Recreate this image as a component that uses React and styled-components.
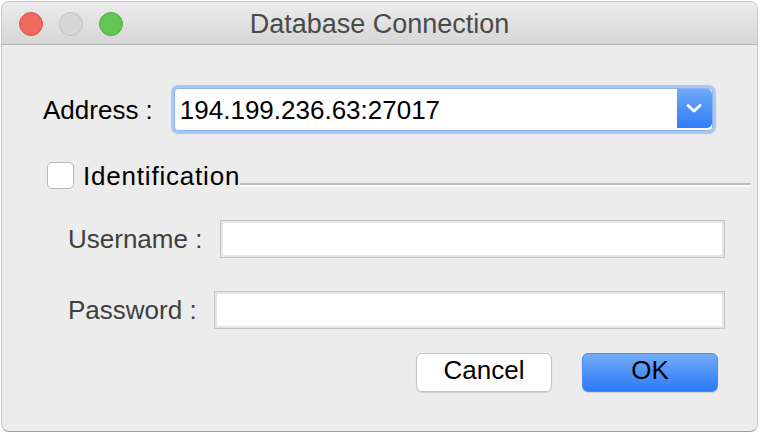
import React from "react";
import styled, { createGlobalStyle } from "styled-components";

const GlobalStyle = createGlobalStyle`
  html, body {
    margin: 0;
    padding: 0;
    background: #ffffff;
  }
  body {
    font-family: "Liberation Sans", Arial, sans-serif;
  }
`;

const Window = styled.div`
  box-sizing: border-box;
  margin: 1px 3px 0 1px;
  width: 757px;
  height: 431px;
  border: 1px solid #c6c6c6;
  border-bottom-color: #9f9f9f;
  border-radius: 8px;
  overflow: hidden;
  background: #ececec;
  display: flex;
  flex-direction: column;
`;

const TitleBar = styled.div`
  box-sizing: border-box;
  height: 43px;
  flex: none;
  display: grid;
  grid-template-columns: 1fr auto 1fr;
  align-items: center;
  background: linear-gradient(#ececec, #d6d6d6);
  border-bottom: 1px solid #b4b4b4;
`;

const Lights = styled.div`
  display: flex;
  gap: 16px;
  margin-top: 2px;
  padding-left: 17px;
`;

const Light = styled.span`
  box-sizing: border-box;
  width: 24px;
  height: 24px;
  border-radius: 50%;
  background: ${(p) => p.$color};
  border: 1px solid ${(p) => p.$edge};
`;

const Title = styled.div`
  font-size: 27px;
  color: #4a4a4a;
  margin-top: 3px;
`;

const Content = styled.div`
  display: flex;
  flex-direction: column;
  font-size: 26px;
  line-height: 30px;
`;

const AddressRow = styled.div`
  display: flex;
  align-items: center;
  margin-top: 43px;
  padding-left: 41px;
`;

const Label = styled.label`
  color: ${(p) => (p.$dim ? "#3f3f3f" : "#000")};
  letter-spacing: ${(p) => p.$spacing || 0}px;
  white-space: nowrap;
`;

const Combo = styled.div`
  box-sizing: border-box;
  display: flex;
  margin-left: 21px;
  width: 539px;
  height: 43px;
  background: #fff;
  border: 1px solid #8db3ee;
  border-radius: 4px;
  box-shadow: 0 0 0 3px #a8c7f4;
`;

const ComboText = styled.div`
  flex: 1;
  display: flex;
  align-items: center;
  padding-left: 5px;
  color: #000;
`;

const ComboButton = styled.div`
  width: 35px;
  margin: 0 0 2px;
  display: flex;
  align-items: center;
  justify-content: center;
  border-radius: 0 5px 5px 0;
  background: linear-gradient(#70aaf9, #2f7cf6);
`;

const CheckRow = styled.div`
  display: flex;
  align-items: center;
  height: 27px;
  margin-top: 31px;
  padding-left: 45px;
`;

const Checkbox = styled.span`
  box-sizing: border-box;
  width: 27px;
  height: 27px;
  margin-right: 9px;
  background: #fff;
  border: 1px solid #b9b9b9;
  border-radius: 5px;
`;

const Rule = styled.div`
  flex: 1;
  align-self: flex-end;
  height: 2px;
  margin: 0 6px 2px 0;
  background: #bdbdbd;
  border-bottom: 2px solid #fafafa;
`;

const FieldRow = styled.div`
  display: flex;
  align-items: center;
  margin-top: ${(p) => p.$top}px;
  padding: 0 32px 0 66px;
  gap: ${(p) => p.$gap}px;
`;

const TextInput = styled.div`
  box-sizing: border-box;
  flex: 1;
  height: 38px;
  background: #fff;
  border: 1px solid #c4c4c4;
  box-shadow: inset 0 0 0 2px #e6e6e6;
`;

const Buttons = styled.div`
  display: flex;
  justify-content: flex-end;
  gap: 30px;
  margin-top: 24px;
  padding-right: 39px;
`;

const Button = styled.button`
  box-sizing: border-box;
  width: 136px;
  height: 39px;
  font-family: inherit;
  font-size: 26px;
  color: #000;
  border-radius: 6px;
  padding: 0 0 5px;
  border: 1px solid ${(p) => (p.$primary ? "#4a89f2" : "#c3c3c3")};
  background: ${(p) =>
    p.$primary ? "linear-gradient(#72acf9, #2c79f5)" : "#ffffff"};
  box-shadow: 0 1px 1px rgba(0, 0, 0, 0.12);
`;

const Chevron = () => (
  <svg width="18" height="11" viewBox="0 0 18 11">
    <path
      d="M3 2.5 L9 8 L15 2.5"
      fill="none"
      stroke="#fff"
      strokeWidth="3"
      strokeLinecap="round"
      strokeLinejoin="round"
    />
  </svg>
);

export default function App() {
  return (
    <>
      <GlobalStyle />
      <Window>
        <TitleBar>
          <Lights>
            <Light $color="#f0695d" $edge="#d6554b" />
            <Light $color="#d6d6d6" $edge="#c0c0c0" />
            <Light $color="#62c655" $edge="#4fa944" />
          </Lights>
          <Title>Database Connection</Title>
          <div />
        </TitleBar>
        <Content>
          <AddressRow>
            <Label>Address :</Label>
            <Combo>
              <ComboText>194.199.236.63:27017</ComboText>
              <ComboButton>
                <Chevron />
              </ComboButton>
            </Combo>
          </AddressRow>
          <CheckRow>
            <Checkbox />
            <Label $spacing={0.8}>Identification</Label>
            <Rule />
          </CheckRow>
          <FieldRow $top={31} $gap={18}>
            <Label $dim>Username :</Label>
            <TextInput />
          </FieldRow>
          <FieldRow $top={33} $gap={17}>
            <Label $dim>Password :</Label>
            <TextInput />
          </FieldRow>
          <Buttons>
            <Button>Cancel</Button>
            <Button $primary>OK</Button>
          </Buttons>
        </Content>
      </Window>
    </>
  );
}
